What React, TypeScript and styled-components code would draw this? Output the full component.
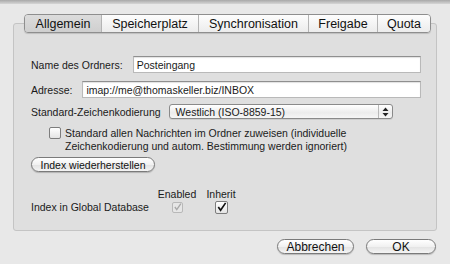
import React from 'react';
import styled, { createGlobalStyle } from 'styled-components';

const GlobalStyle = createGlobalStyle`
    html, body {
        margin: 0;
        padding: 0;
        background: #e8e8e8;
    }
    body {
        font-family: "Liberation Sans", Arial, sans-serif;
        color: #1a1a1a;
    }
`;

const Window = styled.div`
    width: 450px;
    height: 264px;
    box-sizing: border-box;
    background: #e8e8e8;
    display: flex;
    flex-direction: column;
    overflow: hidden;
`;

const TopEdge = styled.div`
    height: 4px;
    background: linear-gradient(#a8a8a8, #d6d6d6);
    margin-bottom: 10px;
`;

const TabBar = styled.div`
    display: flex;
    align-self: flex-start;
    margin-left: 24px;
    height: 19px;
    box-sizing: border-box;
    border: 1px solid #8e8e8e;
    border-radius: 4px;
    overflow: hidden;
    position: relative;
    z-index: 1;
    box-shadow: 0 1px 1px rgba(0, 0, 0, 0.15);
`;

const Tab = styled.div<{ $active?: boolean; $w: number }>`
    width: ${p => p.$w}px;
    display: flex;
    align-items: center;
    justify-content: center;
    font-size: 12.5px;
    color: #111;
    background: ${p => (p.$active
        ? 'linear-gradient(#dcdcdc, #cfcfcf)'
        : 'linear-gradient(#fdfdfd, #ececec)')};
    & + & {
        border-left: 1px solid #b4b4b4;
    }
`;

const Panel = styled.div`
    margin: -10px 13px 0 13px;
    height: 208px;
    box-sizing: border-box;
    border: 1px solid #c4c4c4;
    border-radius: 3px;
    background: #dfdfdf;
    padding: 32px 15px 0 17px;
    display: flex;
    flex-direction: column;
    font-size: 10.5px;
`;

const Row = styled.div<{ $mt?: number }>`
    display: flex;
    align-items: center;
    margin-top: ${p => p.$mt ?? 0}px;
`;

const Label = styled.span`
    white-space: nowrap;
    margin-right: 10px;
`;

const TextField = styled.div`
    flex: 1;
    height: 17px;
    box-sizing: border-box;
    background: #fff;
    border: 1px solid #b9b9b9;
    border-top-color: #8f8f8f;
    box-shadow: inset 0 1px 1px rgba(0, 0, 0, 0.12);
    display: flex;
    align-items: center;
    padding-left: 3px;
    font-size: 10.5px;
`;

const Select = styled.div`
    width: 224px;
    height: 15px;
    margin-left: 8px;
    box-sizing: border-box;
    border: 1px solid #8a8a8a;
    border-radius: 3px;
    background: linear-gradient(#ffffff, #ececec 60%, #f6f6f6);
    display: flex;
    align-items: center;
    box-shadow: 0 1px 0 rgba(0, 0, 0, 0.08);
`;

const SelectText = styled.span`
    flex: 1;
    padding-left: 6px;
    font-size: 10.5px;
`;

const SelectArrows = styled.div`
    width: 13px;
    height: 100%;
    border-left: 1px solid #b8b8b8;
    display: flex;
    align-items: center;
    justify-content: center;
`;

const CheckRow = styled.div`
    display: flex;
    align-items: flex-start;
    margin-top: 8px;
    margin-left: 18px;
    gap: 4px;
    line-height: 13px;
`;

const Box = styled.div<{ $size?: number; $dim?: boolean }>`
    width: ${p => p.$size ?? 11}px;
    height: ${p => p.$size ?? 11}px;
    flex-shrink: 0;
    box-sizing: border-box;
    border: 1px solid ${p => (p.$dim ? '#b8b8b8' : '#7d7d7d')};
    border-radius: 2px;
    background: ${p => (p.$dim ? '#e6e6e6' : 'linear-gradient(#ffffff, #e4e4e4)')};
    display: flex;
    align-items: center;
    justify-content: center;
`;

const PillButton = styled.div<{ $w: number; $fs: number }>`
    width: ${p => p.$w}px;
    height: 15px;
    box-sizing: border-box;
    border: 1px solid #7a7a7a;
    border-radius: 8px;
    background: linear-gradient(#ffffff, #f1f1f1 50%, #e2e2e2 51%, #f4f4f4);
    box-shadow: 0 1px 1px rgba(0, 0, 0, 0.2);
    display: flex;
    align-items: center;
    justify-content: center;
    font-size: ${p => p.$fs}px;
    color: #111;
`;

const IndexGrid = styled.div`
    display: grid;
    grid-template-columns: 123px 46px 42px;
    grid-template-rows: 12px 14px;
    margin-top: 16px;
    align-items: center;
`;

const ColHead = styled.span`
    text-align: center;
    font-size: 10.5px;
    white-space: nowrap;
`;

const Cell = styled.div`
    display: flex;
    justify-content: center;
    align-items: center;
`;

const Footer = styled.div`
    display: flex;
    justify-content: flex-end;
    gap: 12px;
    padding: 8px 14px 0 0;
`;

const Check = ({ color, w }: { color: string; w: number }) => (
    <svg width={w} height={w} viewBox="0 0 12 12">
        <path d="M2.5 6 L5 9.5 L10.5 1.5" fill="none" stroke={color} strokeWidth="1.8" />
    </svg>
);

const App = () => {
    return (
        <Window>
            <GlobalStyle />
            <TopEdge />
            <TabBar>
                <Tab $active $w={76}>Allgemein</Tab>
                <Tab $w={96}>Speicherplatz</Tab>
                <Tab $w={109}>Synchronisation</Tab>
                <Tab $w={68}>Freigabe</Tab>
                <Tab $w={52}>Quota</Tab>
            </TabBar>
            <Panel>
                <Row>
                    <Label>Name des Ordners:</Label>
                    <TextField>Posteingang</TextField>
                </Row>
                <Row $mt={8}>
                    <Label>Adresse:</Label>
                    <TextField>imap://me@thomaskeller.biz/INBOX</TextField>
                </Row>
                <Row $mt={6}>
                    <Label style={{ marginRight: 0 }}>Standard-Zeichenkodierung</Label>
                    <Select>
                        <SelectText>Westlich (ISO-8859-15)</SelectText>
                        <SelectArrows>
                            <svg width="7" height="10" viewBox="0 0 7 10">
                                <path d="M3.5 0.5 L6.5 4 L0.5 4 Z M0.5 6 L6.5 6 L3.5 9.5 Z" fill="#222" />
                            </svg>
                        </SelectArrows>
                    </Select>
                </Row>
                <CheckRow>
                    <Box $size={12} />
                    <span>
                        Standard allen Nachrichten im Ordner zuweisen (individuelle<br />
                        Zeichenkodierung und autom. Bestimmung werden ignoriert)
                    </span>
                </CheckRow>
                <Row $mt={4}>
                    <PillButton $w={124} $fs={10.5}>Index wiederherstellen</PillButton>
                </Row>
                <IndexGrid>
                    <span />
                    <ColHead>Enabled</ColHead>
                    <ColHead>Inherit</ColHead>
                    <Label>Index in Global Database</Label>
                    <Cell>
                        <Box $dim>
                            <Check color="#a8a8a8" w={10} />
                        </Box>
                    </Cell>
                    <Cell>
                        <Box $size={13}>
                            <Check color="#111" w={12} />
                        </Box>
                    </Cell>
                </IndexGrid>
            </Panel>
            <Footer>
                <PillButton $w={77} $fs={12}>Abbrechen</PillButton>
                <PillButton $w={70} $fs={12}>OK</PillButton>
            </Footer>
        </Window>
    );
};

export default App;
